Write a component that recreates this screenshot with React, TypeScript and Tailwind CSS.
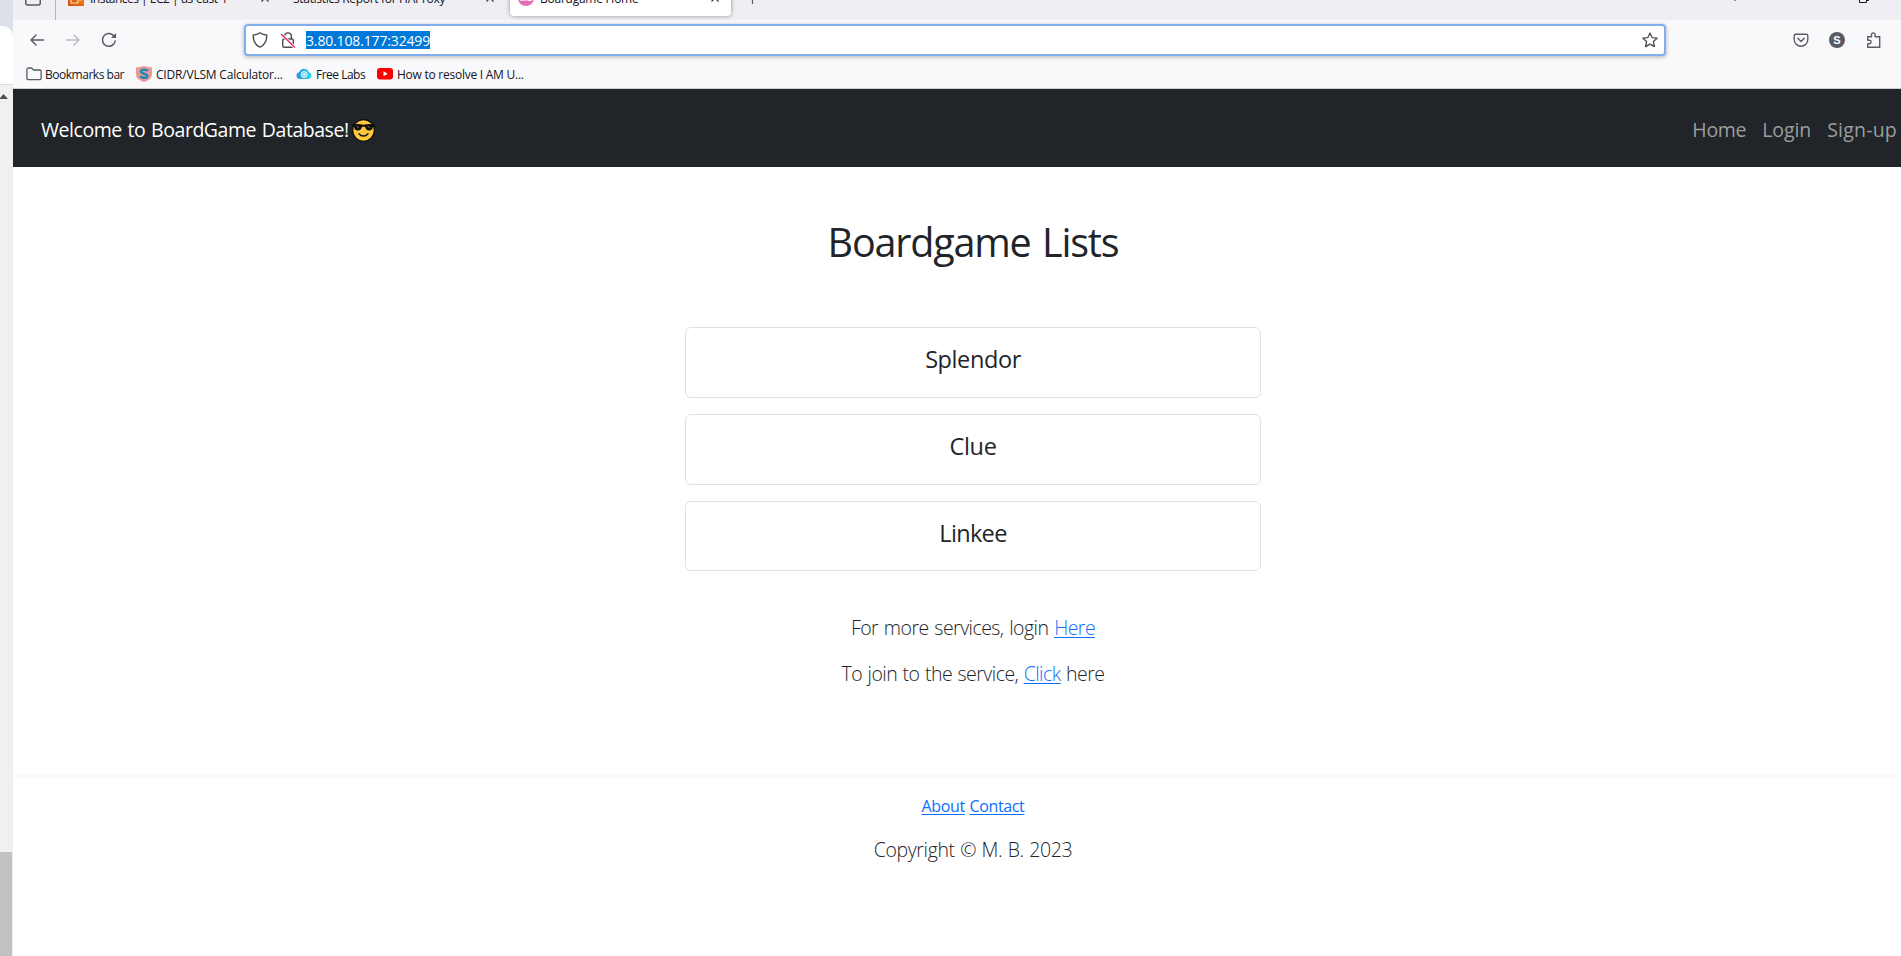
import type { ReactNode } from 'react';

function Cross() {
  return (
    <svg className="size-2 shrink-0" viewBox="0 0 8 8" fill="none" stroke="#38383d" strokeWidth="1.2">
      <path d="M0.5 0.5 7.5 7.5M7.5 0.5 0.5 7.5" />
    </svg>
  );
}

function TabStrip() {
  return (
    <div className="h-5 overflow-hidden bg-[#efeef3] text-[12px] leading-4 text-[#15141a]">
      <div className="-mt-5 flex h-9 items-center">
        <div className="flex h-full w-[42px] shrink-0 items-center pl-3">
          <svg className="size-4" viewBox="0 0 16 16" fill="none" stroke="#5b5b66" strokeWidth="1.5">
            <rect x="0.75" y="1" width="14.5" height="14" rx="2" />
            <path d="M1 5h14" />
          </svg>
        </div>
        <div className="-mb-2 h-11 w-px shrink-0 bg-[#b4b4bb]" />
        <div className="flex w-[224px] shrink-0 items-center pl-3">
          <svg className="size-4 shrink-0" viewBox="0 0 16 16">
            <defs>
              <linearGradient id="ec2" x1="0" y1="1" x2="1" y2="0">
                <stop stopColor="#d4530f" />
                <stop offset="1" stopColor="#f58c12" />
              </linearGradient>
            </defs>
            <rect width="16" height="16" fill="url(#ec2)" />
            <path d="M3 6h7v7H3zM6 6V3h7v7h-3" fill="none" stroke="#ffd9b8" strokeWidth="1.2" />
          </svg>
          <span className="mt-0.5 ml-1.5 w-[171px] whitespace-nowrap tracking-[-0.5px]">Instances | EC2 | us-east-1</span>
          <Cross />
        </div>
        <div className="flex w-[218px] shrink-0 items-center pl-3">
          <span className="mt-0.5 ml-[1px] w-[193px] whitespace-nowrap tracking-[-0.3px]">Statistics Report for HAProxy</span>
          <Cross />
        </div>
        <div className="ml-3 flex h-full w-[221px] shrink-0 items-center rounded bg-white pl-2 shadow-[0_0_4px_rgba(0,0,0,0.4)]">
          <span className="flex size-4 items-center justify-center rounded-full bg-[#e56fb6] text-[8px] font-bold text-white">MB</span>
          <span className="mt-0.5 ml-1.5 w-[171px] whitespace-nowrap tracking-[-0.25px]">Boardgame Home</span>
          <Cross />
        </div>
        <svg className="ml-[15px] size-3 shrink-0" viewBox="0 0 12 12" stroke="#5b5b66" strokeWidth="1.2">
          <path d="M6.5 0v12M0 6h12" />
        </svg>
        <svg className="ml-[971px] size-3 shrink-0" viewBox="0 0 12 12" fill="none" stroke="#5b5b66" strokeWidth="1.5">
          <path d="m1 4 5 4 5-4" />
        </svg>
        <svg className="ml-[118px] size-[10px] shrink-0" viewBox="0 0 10 10" fill="none" stroke="#15141a">
          <path d="M0.5 2.5h7v7h-7zM2.5 2.5v-2h7v7h-2" />
        </svg>
      </div>
    </div>
  );
}

function Toolbar() {
  return (
    <div className="flex h-[40px] items-center">
      <svg className="ml-4 size-4 shrink-0" viewBox="0 0 16 16" fill="none" stroke="#5b5b66" strokeWidth="1.5" strokeLinecap="round" strokeLinejoin="round">
        <path d="M14.5 8H2M7 3 2 8l5 5" />
      </svg>
      <svg className="ml-5 size-4 shrink-0" viewBox="0 0 16 16" fill="none" stroke="#bcbcc2" strokeWidth="1.5" strokeLinecap="round" strokeLinejoin="round">
        <path d="M1.5 8H14M9 3l5 5-5 5" />
      </svg>
      <svg className="ml-5 size-4 shrink-0" viewBox="0 0 16 16" fill="none" stroke="#5b5b66" strokeWidth="1.5" strokeLinecap="round">
        <path d="M14.2 9A6.4 6.4 0 1 1 12.4 3.4" />
        <path d="M15 1v5h-5z" fill="#5b5b66" stroke="none" />
      </svg>
      <div className="ml-[127px] flex h-8 w-[1422px] shrink-0 items-center rounded-[4px] border-2 border-[#80aeee] bg-white shadow-[0_1px_4px_rgba(0,0,0,0.3)]">
        <svg className="ml-1.5 size-4 shrink-0" viewBox="0 0 16 16" fill="none" stroke="#4c4c54" strokeWidth="1.4" strokeLinejoin="round">
          <path d="M8 .8c2 1.5 4.200 2.100 6.700 2.200.3 5.600-1.800 10-6.700 12.200C3.100 13 1 8.600 1.300 3 3.800 2.900 6 2.300 8 .8z" />
        </svg>
        <svg className="ml-3 size-4 shrink-0" viewBox="0 0 16 16" fill="none" stroke="#4c4c54" strokeWidth="1.4">
          <rect x="2.700" y="7" width="10.600" height="8.200" rx="1.500" />
          <path d="M4.700 7V4.200a3.300 3.300 0 0 1 6.600 0V7" />
          <path d="M1 2l14 13.500" stroke="#fff" strokeWidth="3" />
          <path d="M1 2l14 13.500" stroke="#e22850" strokeWidth="1.300" />
        </svg>
        <span className="ml-[10px] h-[18px] w-[124px] bg-[#0078d7] text-[14px] leading-[20px] whitespace-nowrap text-white tracking-[-0.15px]">3.80.108.177:32499</span>
        <svg className="mr-1.5 ml-auto size-4" viewBox="0 0 16 16" fill="none" stroke="#4c4c54" strokeWidth="1.3" strokeLinejoin="round">
          <path d="m8 1 2.100 4.600 5 .600-3.700 3.400 1 5L8 12.100l-4.400 2.500 1-5L.9 6.200l5-.600z" />
        </svg>
      </div>
      <svg className="ml-[127px] size-4 shrink-0" viewBox="0 0 16 16" fill="none" stroke="#5b5b66" strokeWidth="1.4" strokeLinecap="round" strokeLinejoin="round">
        <path d="M2.700 2.200h10.600a1.500 1.500 0 0 1 1.500 1.500V7.500a6.800 6.800 0 0 1-13.600 0V3.700a1.500 1.500 0 0 1 1.500-1.500zM4.700 6.300 8 9.400l3.300-3.100" />
      </svg>
      <span className="ml-5 flex size-4 shrink-0 items-center justify-center rounded-full bg-[#5b5b66] font-['Liberation_Sans',sans-serif] text-[11px] leading-4 font-bold text-white">S</span>
      <svg className="ml-5 size-4 shrink-0" viewBox="0 0 16 16" fill="none" stroke="#5b5b66" strokeWidth="1.4" strokeLinejoin="round">
        <path d="M2.700 4.800h3.800V2.700a1.800 1.800 0 0 1 3.600 0v2.100h4.600v10.500h-12v-3.600h1.600a1.700 1.700 0 0 0 0-3.500H2.700z" />
      </svg>
    </div>
  );
}

function Bookmarks() {
  return (
    <div className="flex h-[28px] items-center text-[12px] leading-4 whitespace-nowrap text-[#15141a]">
      <svg className="ml-[13px] h-4 w-4 shrink-0" viewBox="0 0 16 16" fill="none" stroke="#5b5b66" strokeWidth="1.3" strokeLinejoin="round">
        <path d="M.9 3.400a1.400 1.400 0 0 1 1.400-1.400h3.200l2 2h6.200a1.400 1.400 0 0 1 1.400 1.400v6.900a1.400 1.400 0 0 1-1.400 1.400H2.300a1.400 1.400 0 0 1-1.400-1.400z" />
      </svg>
      <span className="mt-0.5 ml-[3px] w-[91px] tracking-[-0.48px]">Bookmarks bar</span>
      <svg className="size-4 shrink-0" viewBox="0 0 16 16">
        <path d="M0 1.500 8 0l8 1.500V8c0 4-3 6.500-8 8-5-1.500-8-4-8-8z" fill="#e99b98" />
        <path d="M11.800 5C10.500 3.200 5 3.100 5 5.600c0 2.600 6.200 1.600 6.200 4.300 0 2.600-5.400 2.400-7 .4" fill="none" stroke="#2489b5" strokeWidth="2.600" />
      </svg>
      <span className="mt-0.5 ml-1 w-[140px] tracking-[-0.2px]">CIDR/VLSM Calculator...</span>
      <svg className="size-4 shrink-0" viewBox="0 0 16 16">
        <defs>
          <linearGradient id="cloud" x1="0" x2="1">
            <stop stopColor="#2a93dc" />
            <stop offset="1" stopColor="#2adbe6" />
          </linearGradient>
        </defs>
        <path d="M3.500 13a3.400 3.400 0 0 1-.3-6.700A5.100 5.100 0 0 1 12.900 6.300 3.400 3.400 0 0 1 12.500 13z" fill="url(#cloud)" />
        <circle cx="8.200" cy="8.500" r="3" fill="#7fd6f1" stroke="#e6f9fd" />
        <circle cx="8.200" cy="8.500" r="1.200" fill="#e6f9fd" />
      </svg>
      <span className="mt-0.5 ml-1 w-[61px] tracking-[-0.5px]">Free Labs</span>
      <svg className="size-4 shrink-0" viewBox="0 0 16 16">
        <rect x="0" y="2" width="16" height="11.500" rx="3" fill="#f00" />
        <path d="m6.500 5.300 4.200 2.450-4.200 2.450z" fill="#fff" />
      </svg>
      <span className="mt-0.5 ml-1 tracking-[-0.25px]">How to resolve I AM U...</span>
    </div>
  );
}

function SunglassesFace() {
  return (
    <svg className="ml-[3px] size-[23px]" viewBox="0 0 23 23">
      <circle cx="11.500" cy="11.500" r="10.800" fill="#ffc83d" stroke="#0c0c0c" strokeWidth="1.200" />
      <path d="M0 5.700C4 4.600 8 4.900 11.500 5.800 15 4.900 19 4.600 23 5.700v1.700l-2.200.4c0 2.700-1.200 3.700-3.700 3.700-2.400 0-3.600-1.300-4.100-3.700h-3c-.5 2.400-1.700 3.700-4.100 3.700-2.500 0-3.700-1-3.700-3.700L0 7.400z" fill="#0c0c0c" />
      <path d="m4.500 6.700 2.400 2.400M15.500 6.700l2.400 2.400" stroke="#777b80" strokeWidth="1" />
      <path d="M7 14.800c2.300 3 6.700 3 9 0" fill="none" stroke="#1b1a17" strokeWidth="1.500" strokeLinecap="round" />
    </svg>
  );
}

function Card({ children }: { children: ReactNode }) {
  return <li className="flex h-[71px] w-[576px] justify-center rounded-[6px] border border-[#dfe0e5] pt-[17px] text-[23.5px] leading-[29px] last:h-[70px]">{children}</li>;
}

function Link({ children }: { children: ReactNode }) {
  return <a href="#" className="text-[#0d6efd] underline decoration-1 underline-offset-2">{children}</a>;
}

export default function App() {
  return (
    <div className="flex h-[956px] w-[1901px] overflow-hidden bg-white font-['Open_Sans','Noto_Sans',sans-serif] text-[#212529]">
      <aside className="flex w-[13px] shrink-0 flex-col bg-[#f0f0f0]">
        <div className="h-[84px] bg-[#dce0e8] pt-[26px]">
          <div className="h-[58px] rounded-tr-[10px] bg-white" />
        </div>
        <div className="h-px bg-[#dcdcdc]" />
        <svg className="mt-[9px] h-[5px] w-2" viewBox="0 0 8 5">
          <path d="M-1 5 3.500 0 8 5z" fill="#505050" />
        </svg>
        <div className="mt-auto h-[104px] w-3 bg-[#c1c1c1]" />
      </aside>
      <div className="flex min-w-0 flex-1 flex-col">
        <header className="h-[89px] shrink-0 border-b border-[#ccccd1] bg-[#f9f9fb]">
          <TabStrip />
          <Toolbar />
          <Bookmarks />
        </header>
        <nav className="flex h-[78px] shrink-0 items-center bg-[#212529] pt-1 pr-1 pl-7 text-[19.5px] leading-[30px] text-white">
          <span className="tracking-[-0.46px] [word-spacing:1.2px]">Welcome to BoardGame Database!</span>
          <SunglassesFace />
          <div className="ml-auto flex gap-4 text-[#9b9d9e]">
            <span className="tracking-[-0.3px]">Home</span>
            <span className="tracking-[-0.1px]">Login</span>
            <span className="tracking-[0.22px]">Sign-up</span>
          </div>
        </nav>
        <main className="flex h-[608px] shrink-0 flex-col items-center pt-[51px] pl-8">
          <h1 className="text-[39.5px] leading-[48px] tracking-[-1.2px] [word-spacing:2.5px]">Boardgame Lists</h1>
          <ul className="mt-[61px] flex flex-col gap-4">
            <Card><span className="tracking-[-0.400px]">Splendor</span></Card>
            <Card><span className="tracking-[-0.300px]">Clue</span></Card>
            <Card><span className="tracking-[-0.650px]">Linkee</span></Card>
          </ul>
          <p className="mt-[42px] text-[19.5px] leading-[30px] font-light tracking-[-0.54px] [word-spacing:1.2px]">For more services, login <Link>Here</Link></p>
          <p className="mt-4 text-[19.5px] leading-[30px] font-light tracking-[-0.53px] [word-spacing:0.9px]">To join to the service, <Link>Click</Link> here</p>
        </main>
        <footer className="flex flex-col items-center border-t-2 border-[#f8f9fa] pt-[17px] pl-8">
          <p className="text-[16px] leading-6 tracking-[-0.370px] [word-spacing:1px]"><Link>About</Link> <Link>Contact</Link></p>
          <p className="mt-[17px] text-[19.5px] leading-[30px] font-light tracking-[-0.350px] [word-spacing:0.7px]">Copyright © M. B. 2023</p>
        </footer>
      </div>
    </div>
  );
}
